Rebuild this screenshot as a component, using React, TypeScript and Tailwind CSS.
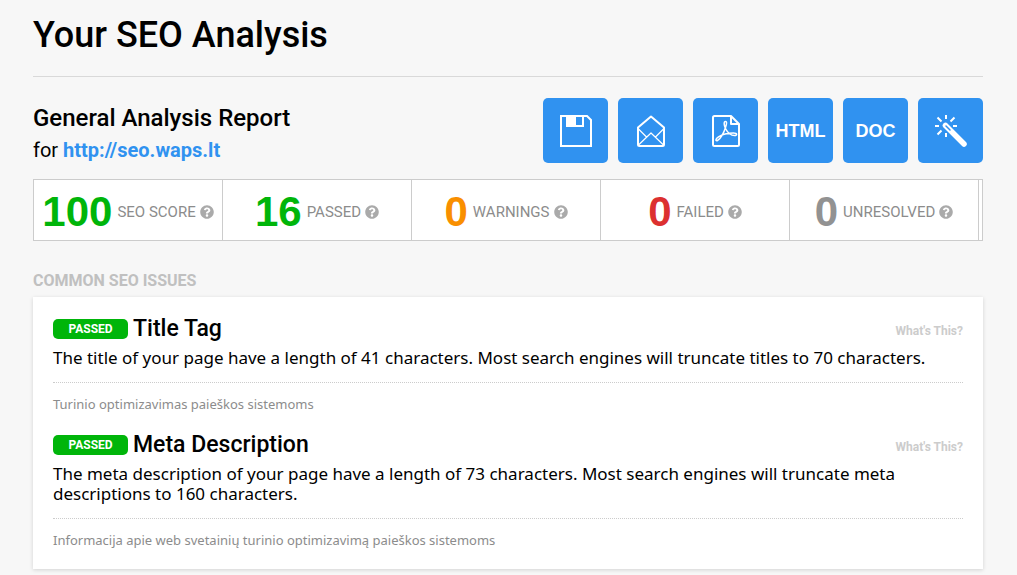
import type { ReactNode } from "react";
import { FaQuestionCircle } from "react-icons/fa";

type Stat = {
  label: string;
  value: number;
  color: string;
};

type Issue = {
  title: string;
  text: string;
  note: string;
};

const stats: Stat[] = [
  { label: "SEO SCORE", value: 100, color: "text-[#00b50a]" },
  { label: "PASSED", value: 16, color: "text-[#00b50a]" },
  { label: "WARNINGS", value: 0, color: "text-[#f98f00]" },
  { label: "FAILED", value: 0, color: "text-[#dc3030]" },
  { label: "UNRESOLVED", value: 0, color: "text-[#929292]" },
];

const issues: Issue[] = [
  {
    title: "Title Tag",
    text: "The title of your page have a length of 41 characters. Most search engines will truncate titles to 70 characters.",
    note: "Turinio optimizavimas paieškos sistemoms",
  },
  {
    title: "Meta Description",
    text: "The meta description of your page have a length of 73 characters. Most search engines will truncate meta descriptions to 160 characters.",
    note: "Informacija apie web svetainių turinio optimizavimą paieškos sistemoms",
  },
];

function SaveIcon() {
  return (
    <svg viewBox="0 0 32 32" className="size-8" fill="none" stroke="currentColor" strokeWidth="2">
      <path d="M1 1H27L31 5V31H1Z" />
      <path d="M6 0H16V12H6Z" fill="currentColor" stroke="none" />
      <path d="M15 1H23V11H15Z" />
    </svg>
  );
}

function MailIcon() {
  return (
    <svg viewBox="0 0 32 32" className="size-8" fill="none" stroke="currentColor" strokeWidth="2" strokeLinejoin="round">
      <path d="M3 12.5L16 1.5L29 12.5V29.5Q29 31 27.5 31H4.5Q3 31 3 29.5Z" />
      <path d="M3.5 30L16 18L28.5 30M3.5 14L11.5 22M28.5 14L20.5 22" strokeWidth="1.2" />
    </svg>
  );
}

function PdfIcon() {
  return (
    <svg viewBox="0 0 32 32" className="size-8" fill="none" stroke="currentColor" strokeWidth="2" strokeLinejoin="round">
      <path d="M4.500 1H21L29 9V29.5Q29 31 27.5 31H4.5Q3 31 3 29.5V2.5Q3 1 4.5 1Z" />
      <path d="M21 1V9H29" />
      <path
        d="M15.500 6.500C13.500 6.500 14 10.500 15.500 13.500C17.500 17.500 20.500 20.500 24.500 20.500C27.500 20.500 27.500 18 23.500 18C18.500 18 12 19.500 8.500 21.800C5 24.200 5.500 26.500 7.500 25.500C10.500 24 14 17.500 15.500 12.500C16.800 8.500 17 6.500 15.500 6.500Z"
        strokeWidth="1.5"
      />
    </svg>
  );
}

function WandIcon() {
  return (
    <svg viewBox="0 0 32 32" className="size-8" fill="none" stroke="currentColor" strokeWidth="2">
      <path d="M11 0V4M11 18V22M0 11H4M18 11H22M2.5 2.5L6.5 6.5M19.5 2.5L15.5 6.5M2.5 19.5L6.5 15.5" />
      <path d="M10.500 10.500L29 29" strokeWidth="5.5" strokeLinecap="round" />
      <path d="M11 11L15 15" stroke="#3092f0" strokeWidth="1.5" strokeLinecap="round" />
    </svg>
  );
}

function ExportButton({ label, children }: { label: string; children: ReactNode }) {
  return (
    <button
      type="button"
      aria-label={label}
      className="flex size-[65px] items-center justify-center rounded-[5px] bg-[#3092f0] font-['Liberation_Sans',sans-serif] text-lg font-bold text-white"
    >
      {children}
    </button>
  );
}

function IssueItem({ issue }: { issue: Issue }) {
  return (
    <article>
      <div className="flex h-9 items-center gap-[5px]">
        <span className="w-[75px] rounded-[5px] bg-[#00b50a] text-center text-xs leading-5 font-bold text-white">PASSED</span>
        <h3 className="text-[23px] font-medium">{issue.title}</h3>
        <a href="#help" className="ml-auto pt-1 text-xs font-bold text-[#cccccc]">
          What's This?
        </a>
      </div>
      <p className="border-b border-dotted border-[#cccccc] pt-px pb-3.5 font-['Noto_Sans',sans-serif] text-[17px] leading-5">{issue.text}</p>
      <p className="pt-[11px] font-['Noto_Sans',sans-serif] text-[13px] leading-5 text-[#8c8c8c]">{issue.note}</p>
    </article>
  );
}

export default function App() {
  return (
    <main className="min-h-screen bg-[#f7f7f7] pt-[15px] pr-[34px] pb-1 pl-[33px] font-[Roboto,sans-serif] text-black">
      <h1 className="border-b border-[#d9d9d9] pb-[21px] text-4xl leading-10 font-medium">Your SEO Analysis</h1>

      <header className="mt-[21px] flex items-start justify-between">
        <div className="pt-1">
          <h2 className="text-2xl leading-8 font-medium">General Analysis Report</h2>
          <p className="text-xl leading-8">
            for{" "}
            <a href="http://seo.waps.lt" className="font-bold text-[#3092f0]">
              http://seo.waps.lt
            </a>
          </p>
        </div>
        <div className="flex gap-2.5">
          <ExportButton label="Save"><SaveIcon /></ExportButton>
          <ExportButton label="Send by email"><MailIcon /></ExportButton>
          <ExportButton label="Download PDF"><PdfIcon /></ExportButton>
          <ExportButton label="HTML">HTML</ExportButton>
          <ExportButton label="DOC">DOC</ExportButton>
          <ExportButton label="Fix issues"><WandIcon /></ExportButton>
        </div>
      </header>

      <ul className="mt-[13px] flex border border-[#cccccc] bg-white pr-[3px]">
        {stats.map((s) => (
          <li key={s.label} className="flex h-[60px] flex-1 items-center justify-center gap-[5px] border-r border-[#cccccc] pt-1">
            <span className={`font-['Liberation_Sans',sans-serif] text-[42px] leading-none font-bold ${s.color}`}>{s.value}</span>
            <span className="flex items-center gap-1 text-[15px] text-[#8c8c8c]">
              {s.label}
              <FaQuestionCircle className="size-3.5 text-[#aaaaaa]" />
            </span>
          </li>
        ))}
      </ul>

      <h2 className="mt-7 text-base leading-6 font-bold text-[#c0c0c0]">COMMON SEO ISSUES</h2>
      <section className="mt-1 space-y-[13px] bg-white px-5 pt-3.5 pb-[19px] shadow-[0_1px_4px_rgba(0,0,0,0.15)]">
        {issues.map((issue) => (
          <IssueItem key={issue.title} issue={issue} />
        ))}
      </section>
    </main>
  );
}
